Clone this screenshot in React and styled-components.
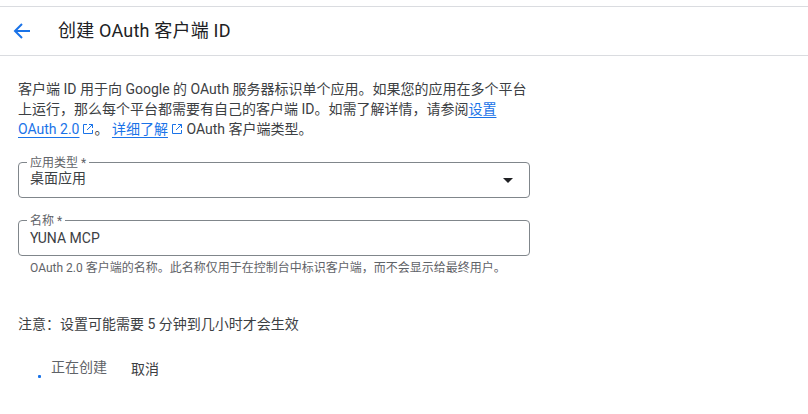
import React from 'react';
import styled, { createGlobalStyle } from 'styled-components';

const GlobalStyle = createGlobalStyle`
  html, body {
    margin: 0;
    padding: 0;
    background: #fff;
    overflow: hidden;
  }
  body {
    font-family: Roboto, "Noto Sans CJK SC", sans-serif;
    color: #3c4043;
  }
`;

const Page = styled.div`
  width: 808px;
  height: 414px;
  padding-top: 6px;
  box-sizing: border-box;
`;

const Header = styled.header`
  display: flex;
  align-items: center;
  height: 50px;
  box-sizing: border-box;
  border-top: 1px solid #dadce0;
  border-bottom: 1px solid #dadce0;
`;

const BackButton = styled.button`
  display: flex;
  align-items: center;
  justify-content: center;
  width: 18px;
  height: 18px;
  margin-left: 13px;
  padding: 0;
  background: none;
  border: none;
  color: #1a73e8;
`;

const Title = styled.h1`
  margin: 0 0 0 27px;
  font-size: 18px;
  font-weight: 400;
  line-height: 24px;
  letter-spacing: 0.2px;
  color: #202124;
`;

const Content = styled.main`
  width: 512px;
  margin-left: 18px;
  padding-top: 23px;
`;

const Intro = styled.p`
  margin: 0;
  font-size: 14px;
  line-height: 20px;
  color: #3c4043;
`;

const DocLink = styled.a`
  color: #1a73e8;
  text-decoration: underline;
  text-decoration-thickness: 1px;
  text-underline-offset: 3px;
`;

const External = styled.svg`
  width: 12px;
  height: 12px;
  margin-left: 3px;
  vertical-align: -1px;
  color: #1a73e8;
`;

const Field = styled.div`
  position: relative;
  margin-top: ${(p) => p.$top}px;
  padding: 0 11px;
  height: 36px;
  box-sizing: border-box;
  display: flex;
  align-items: center;
  justify-content: space-between;
  border: 1px solid #80868b;
  border-radius: 4px;
`;

const Legend = styled.span`
  position: absolute;
  top: -7px;
  left: 8px;
  padding: 0 3px;
  background: #fff;
  font-size: 12px;
  line-height: 14px;
  color: #5f6368;
`;

const FieldValue = styled.span`
  margin-top: ${(p) => p.$lift}px;
  font-size: 14px;
  line-height: 20px;
  color: #3c4043;
`;

const Arrow = styled.span`
  width: 0;
  height: 0;
  margin-right: 5px;
  border-left: 5px solid transparent;
  border-right: 5px solid transparent;
  border-top: 5px solid #202124;
`;

const Hint = styled.p`
  margin: 4px 0 0 12px;
  font-size: 12px;
  line-height: 16px;
  color: #5f6368;
`;

const Note = styled.p`
  margin: 38px 0 0;
  font-size: 14px;
  line-height: 20px;
  color: #3c4043;
`;

const Actions = styled.div`
  display: flex;
  align-items: center;
  margin-top: 22px;
  height: 24px;
  font-size: 14px;
`;

const Spinner = styled.span`
  width: 3px;
  height: 3px;
  margin: 16px 10px 0 20px;
  background: #1a73e8;
  border-radius: 1px;
`;

const Pending = styled.span`
  margin-bottom: 4px;
  color: #5f6368;
`;

const Cancel = styled.button`
  margin-left: 24px;
  padding: 0;
  background: none;
  border: none;
  font: inherit;
  color: #3c4043;
`;

const ExternalIcon = () => (
  <External viewBox="0 0 12 12" fill="none" stroke="currentColor" strokeWidth="1">
    <path d="M5 1.5H1.5v9h9V7M7 1.5h3.5V5M10.5 1.5 5 7" />
  </External>
);

const App = () => (
  <Page>
    <GlobalStyle />
    <Header>
      <BackButton aria-label="返回">
        <svg width="18" height="18" viewBox="0 0 18 18" fill="none" stroke="currentColor" strokeWidth="2">
          <path d="M17 9H2.5M9 2 2 9l7 7" />
        </svg>
      </BackButton>
      <Title>创建 OAuth 客户端 ID</Title>
    </Header>
    <Content>
      <Intro>
        客户端 ID 用于向 Google 的 OAuth 服务器标识单个应用。如果您的应用在多个平台上运行，那么每个平台都需要有自己的客户端 ID。如需了解详情，请参阅
        <DocLink href="#">设置 OAuth 2.0</DocLink>
        <ExternalIcon />。 <DocLink href="#">详细了解</DocLink>
        <ExternalIcon /> OAuth 客户端类型。
      </Intro>
      <Field $top={23}>
        <Legend>应用类型 *</Legend>
        <FieldValue $lift={-4}>桌面应用</FieldValue>
        <Arrow />
      </Field>
      <Field $top={22}>
        <Legend>名称 *</Legend>
        <FieldValue $lift={-1}>YUNA MCP</FieldValue>
      </Field>
      <Hint>OAuth 2.0 客户端的名称。此名称仅用于在控制台中标识客户端，而不会显示给最终用户。</Hint>
      <Note>注意：设置可能需要 5 分钟到几小时才会生效</Note>
      <Actions>
        <Spinner />
        <Pending>正在创建</Pending>
        <Cancel>取消</Cancel>
      </Actions>
    </Content>
  </Page>
);

export default App;
